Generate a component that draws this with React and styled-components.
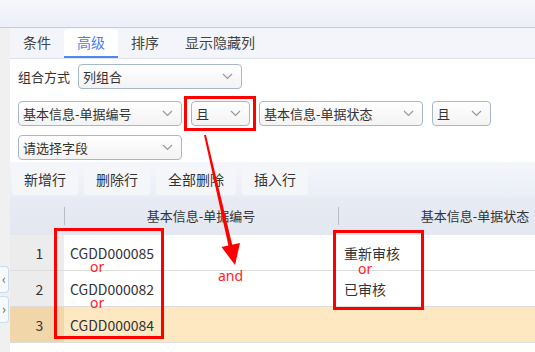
import styled, { createGlobalStyle } from "styled-components";

const GlobalStyle = createGlobalStyle`
  html, body {
    margin: 0;
    padding: 0;
    background: #fff;
    font-family: "Noto Sans CJK SC", "Noto Sans", sans-serif;
    color: #333;
  }
`;

const Page = styled.div`
  position: relative;
  width: 535px;
  height: 352px;
  overflow: hidden;
`;

const TopBar = styled.div`
  height: 27px;
  background: linear-gradient(#f6f7fb, #eceff8);
  border-bottom: 1px solid #c9cbd3;
`;

const Body = styled.div`
  display: flex;
  height: 324px;
`;

const SideStrip = styled.div`
  position: relative;
  width: 10px;
  flex: none;
  background: #f0f0f0;
`;

const SideToggle = styled.div`
  position: absolute;
  left: 0;
  top: ${({ $top }) => $top}px;
  width: 8px;
  height: 25px;
  border: 1px solid #c9dbef;
  border-left: none;
  border-radius: 0 4px 4px 0;
  background: #f6f9fd;
  color: #666;
  font-size: 13px;
  line-height: 24px;
  text-align: center;
`;

const Main = styled.div`
  flex: 1;
  min-width: 0;
  display: flex;
  flex-direction: column;
`;

const TabBar = styled.div`
  display: flex;
  height: 29px;
  padding-top: 1px;
  background: #f3f5fa;
  border-bottom: 1px solid #dfe2ea;
`;

const Tab = styled.div`
  padding: 0 13px;
  font-size: 14px;
  line-height: 27px;
  color: ${({ $active }) => ($active ? "#4b7cf0" : "#444")};
  background: ${({ $active }) => ($active ? "#fff" : "transparent")};
  border-bottom: 2px solid ${({ $active }) => ($active ? "#4d8af0" : "transparent")};
  border-radius: 4px 4px 0 0;
`;

const Form = styled.div`
  display: flex;
  flex-direction: column;
  gap: 9px;
  padding: 5px 8px 0;
`;

const FormRow = styled.div`
  display: flex;
  align-items: center;
  gap: 9px;
  margin-top: ${({ $mt }) => $mt || 0}px;
`;

const Label = styled.span`
  font-size: 13px;
  color: #333;
  margin-right: -1px;
`;

const SelectBox = styled.div`
  position: relative;
  box-sizing: border-box;
  width: ${({ $w }) => $w}px;
  height: 25px;
  padding-left: 4px;
  border: 1px solid #a7b7c8;
  border-radius: 4px;
  background: linear-gradient(#ffffff, #f3f3f3);
  font-size: 13px;
  line-height: 23px;
  color: #333;
  white-space: nowrap;
  overflow: hidden;
`;

const Chevron = styled.svg`
  position: absolute;
  right: 8px;
  top: 8px;
`;

const Toolbar = styled.div`
  display: flex;
  gap: 6px;
  margin-top: 2px;
  padding: 2px 2px;
  background: linear-gradient(#f4f6fb, #eaeef6);
`;

const ToolButton = styled.div`
  padding: 0 12px;
  height: 31px;
  line-height: 31px;
  font-size: 14px;
  color: #333;
  background: #f5f6f9;
  border-radius: 3px;
`;

const Table = styled.div`
  display: grid;
  grid-template-columns: 54px 274px 274px;
`;

const HeadCell = styled.div`
  position: relative;
  height: 38px;
  line-height: 38px;
  text-align: center;
  font-size: 13px;
  color: #333;
  background: linear-gradient(#e8ebf3, #e3e7f0);
  white-space: nowrap;

  &::before {
    content: "";
    display: ${({ $sep }) => ($sep ? "block" : "none")};
    position: absolute;
    left: 0;
    top: 10px;
    height: 18px;
    border-left: 1px solid #b8bcc4;
  }
`;

const NumCell = styled.div`
  box-sizing: border-box;
  height: 36px;
  display: flex;
  align-items: center;
  justify-content: center;
  padding-left: 5px;
  font-size: 14px;
  color: #333;
  background: ${({ $hl }) => ($hl ? "#f0d6a9" : "#ececec")};
  border-bottom: 1px solid #dcdcdc;
`;

const DataCell = styled.div`
  box-sizing: border-box;
  height: 36px;
  display: flex;
  align-items: center;
  padding: 1px 0 0 6px;
  background: ${({ $hl }) => ($hl ? "#fde8c1" : "#fff")};
  border-bottom: 1px solid #dcdcdc;
`;

const CellText = styled.span`
  font-size: 14px;
  line-height: 18px;
  color: #333;
`;

const Mark = styled.div`
  position: absolute;
  left: ${({ $x }) => $x}px;
  top: ${({ $y }) => $y}px;
  width: ${({ $w }) => $w}px;
  height: ${({ $h }) => $h}px;
  box-sizing: border-box;
  border: 3px solid #f00;
  pointer-events: none;
`;

const Note = styled.span`
  position: absolute;
  left: ${({ $x }) => $x}px;
  top: ${({ $y }) => $y}px;
  font-family: "Noto Sans", "Liberation Sans", sans-serif;
  font-size: 14px;
  line-height: 10px;
  color: #f22;
`;

const Overlay = styled.svg`
  position: absolute;
  left: 0;
  top: 0;
  pointer-events: none;
`;

function Select({ width, value }) {
  return (
    <SelectBox $w={width}>
      {value}
      <Chevron width="11" height="7" viewBox="0 0 11 7">
        <path d="M1 1l4.5 4.5L10 1" fill="none" stroke="#999" strokeWidth="1.2" />
      </Chevron>
    </SelectBox>
  );
}

const rows = [
  { n: 1, code: "CGDD000085", status: "重新审核" },
  { n: 2, code: "CGDD000082", status: "已审核" },
  { n: 3, code: "CGDD000084", status: "", hl: true },
];

export default function App() {
  return (
    <Page>
      <GlobalStyle />
      <TopBar />
      <Body>
        <SideStrip>
          <SideToggle $top={238}>‹</SideToggle>
          <SideToggle $top={268}>›</SideToggle>
        </SideStrip>
        <Main>
          <TabBar>
            <Tab>条件</Tab>
            <Tab $active>高级</Tab>
            <Tab>排序</Tab>
            <Tab>显示隐藏列</Tab>
          </TabBar>
          <Form>
            <FormRow>
              <Label>组合方式</Label>
              <Select width={164} value="列组合" />
            </FormRow>
            <FormRow $mt={3}>
              <Select width={164} value="基本信息-单据编号" />
              <Select width={59} value="且" />
              <Select width={164} value="基本信息-单据状态" />
              <Select width={59} value="且" />
            </FormRow>
            <FormRow>
              <Select width={164} value="请选择字段" />
            </FormRow>
          </Form>
          <Toolbar>
            <ToolButton>新增行</ToolButton>
            <ToolButton>删除行</ToolButton>
            <ToolButton>全部删除</ToolButton>
            <ToolButton>插入行</ToolButton>
          </Toolbar>
          <Table>
            <HeadCell />
            <HeadCell $sep>基本信息-单据编号</HeadCell>
            <HeadCell $sep>基本信息-单据状态</HeadCell>
            {rows.map((r) => [
              <NumCell key={`n${r.n}`} $hl={r.hl}>{r.n}</NumCell>,
              <DataCell key={`c${r.n}`} $hl={r.hl}>
                <CellText>{r.code}</CellText>
              </DataCell>,
              <DataCell key={`s${r.n}`} $hl={r.hl}>
                {r.status && <CellText>{r.status}</CellText>}
              </DataCell>,
            ])}
          </Table>
        </Main>
      </Body>

      <Mark $x={184} $y={96} $w={72} $h={35} />
      <Mark $x={54} $y={228} $w={110} $h={111} />
      <Mark $x={333} $y={230} $w={91} $h={80} />
      <Note $x={90} $y={262}>or</Note>
      <Note $x={90} $y={298}>or</Note>
      <Note $x={358} $y={264}>or</Note>
      <Note $x={218} $y={271}>and</Note>

      <Overlay width="535" height="352" viewBox="0 0 535 352">
        <polygon points="204,135 206,135 232.5,246 228.5,246" fill="#f00" />
        <polygon points="221.5,247 240,243 235,265" fill="#f00" />
      </Overlay>
    </Page>
  );
}
